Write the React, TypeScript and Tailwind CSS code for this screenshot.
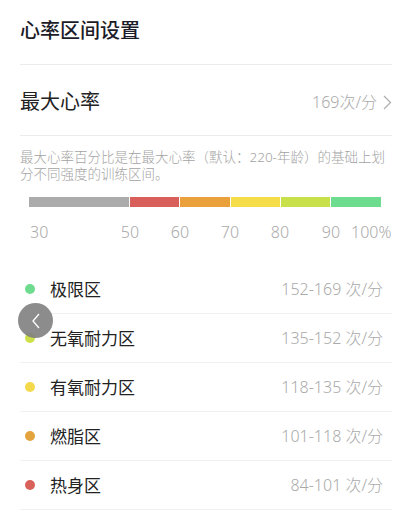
const zones = [
  { name: "极限区", range: "152-169", color: "bg-[#6edb8f]" },
  { name: "无氧耐力区", range: "135-152", color: "bg-[#cde04a]" },
  { name: "有氧耐力区", range: "118-135", color: "bg-[#f4d94c]" },
  { name: "燃脂区", range: "101-118", color: "bg-[#e3a33f]" },
  { name: "热身区", range: "84-101", color: "bg-[#d8625a]" },
];

const segs = [
  { w: "w-[100px]", color: "bg-[#ababab]" },
  { w: "w-[49px]", color: "bg-[#d9605a]" },
  { w: "w-[50px]", color: "bg-[#eba13b]" },
  { w: "w-[49px]", color: "bg-[#f5dd4a]" },
  { w: "w-[49px]", color: "bg-[#c8e04a]" },
  { w: "w-[50px]", color: "bg-[#6ddc8f]" },
];

export default function App() {
  return (
    <div
      className="relative w-[412px] h-[524px] bg-white overflow-hidden px-5"
      style={{ fontFamily: '"Noto Sans", "Noto Sans CJK SC", sans-serif' }}
    >
      <div className="h-[65px] flex items-center border-b border-[#ececec]">
        <span className="text-[20px] font-medium text-[#1c1c28] leading-none pb-[2px]">
          心率区间设置
        </span>
      </div>

      <div className="h-[71px] flex items-center justify-between border-b border-[#ececec]">
        <span className="text-[20px] text-[#222] leading-none pt-[4px]">最大心率</span>
        <div className="flex items-center gap-[6px] pt-[4px] text-[#aaa]">
          <span className="text-[16px] font-light leading-none">169次/分</span>
          <svg width="9" height="15" viewBox="0 0 9 15" fill="none">
            <path d="M1 1l6.5 6.5L1 14" stroke="#b0b0b0" strokeWidth="1.3" />
          </svg>
        </div>
      </div>

      <div className="pt-[15px] flex flex-col gap-[4px] text-[13.5px] text-[#a3a3a3] whitespace-nowrap font-light leading-[13px]">
        <span>最大心率百分比是在最大心率（默认：220-年龄）的基础上划</span>
        <span>分不同强度的训练区间。</span>
      </div>

      <div className="mt-[16px] ml-[9px] flex h-[10px] gap-px">
        {segs.map((s, i) => (
          <div key={i} className={`${s.w} ${s.color} h-full`} />
        ))}
      </div>

      <div className="mt-[15px] flex h-5 items-center text-[16px] font-light text-[#aaa] leading-none">
        <span className="w-[85px] pl-[10px]">30</span>
        <span className="w-[50px] text-center">50</span>
        <span className="w-[50px] text-center">60</span>
        <span className="w-[50px] text-center">70</span>
        <span className="w-[50px] text-center">80</span>
        <span className="ml-[6px] w-[40px] text-center">90</span>
        <span>100%</span>
      </div>

      <div className="mt-[23px]">
        {zones.map((z) => (
          <div
            key={z.name}
            className="h-[49px] flex items-center justify-between border-b border-[#f0f0f0]"
          >
            <div className="flex items-center">
              <span className={`ml-[5px] w-[10px] h-[10px] rounded-full ${z.color}`} />
              <span className="ml-[15px] text-[17px] text-[#222] leading-none">{z.name}</span>
            </div>
            <span className="pr-[9px] text-[16px] font-light text-[#aaa] leading-none">
              {z.range} 次/分
            </span>
          </div>
        ))}
      </div>

      <div className="absolute left-[18px] top-[303px] w-[35px] h-[35px] rounded-full bg-[#808080]/90 flex items-center justify-center">
        <svg width="10" height="16" viewBox="0 0 10 16" fill="none">
          <path d="M8 1L2 8l6 7" stroke="#fff" strokeWidth="1.3" />
        </svg>
      </div>
    </div>
  );
}
